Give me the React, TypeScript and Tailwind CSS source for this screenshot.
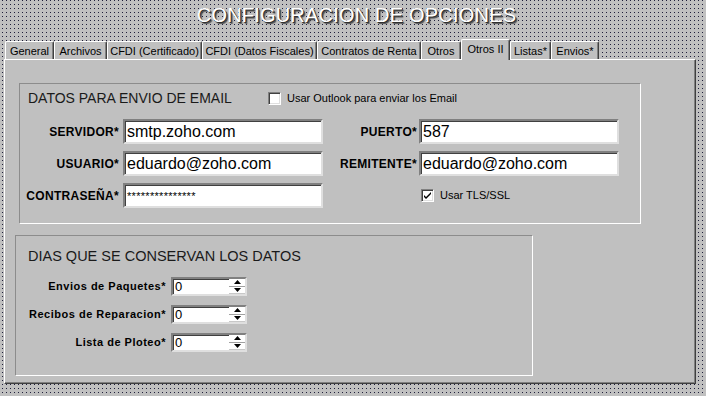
import React from "react";

const FONT = "[font-family:'Liberation_Sans',Arial,sans-serif]";

const tabs = [
  { label: "General", w: "w-[49px]" },
  { label: "Archivos", w: "w-[53px]" },
  { label: "CFDI (Certificado)", w: "w-[95px]" },
  { label: "CFDI (Datos Fiscales)", w: "w-[115px]" },
  { label: "Contratos de Renta", w: "w-[104px]" },
  { label: "Otros", w: "w-[40px]" },
  { label: "Otros II", w: "w-[49px]", active: true },
  { label: "Listas*", w: "w-[41px]" },
  { label: "Envios*", w: "w-[48px]" },
];

function Tab({ label, w, active }: { label: string; w: string; active?: boolean }) {
  if (active) {
    return (
      <div className={`${w} h-[21px] -mb-[1px] bg-[#c0c0c0] border-t border-l border-white border-r border-r-[#404040] shadow-[inset_-1px_0_0_#808080] rounded-t-[2px] flex justify-center pt-[3px] text-[11px] leading-[13px] text-black relative z-10`}>
        {label}
      </div>
    );
  }
  return (
    <div className={`${w} h-[18px] bg-[#c0c0c0] border-t border-l border-white border-r border-r-[#404040] shadow-[inset_-1px_0_0_#808080] rounded-t-[2px] flex justify-center pt-[3px] text-[11px] leading-[13px] text-black`}>
      {label}
    </div>
  );
}

function Check({ checked }: { checked?: boolean }) {
  return (
    <div className="w-[13px] h-[13px] bg-white border-t border-l border-[#808080] border-b border-r border-b-white border-r-white shadow-[inset_1px_1px_0_#404040,inset_-1px_-1px_0_#dfdfdf] flex items-center justify-center shrink-0">
      {checked && (
        <svg width="9" height="9" viewBox="0 0 9 9">
          <path d="M1 4 L3 6 L8 1 L8 3 L3 8 L1 6 Z" fill="#000" />
        </svg>
      )}
    </div>
  );
}

function TextBox({ value, small }: { value: string; small?: boolean }) {
  return (
    <div className="w-[200px] h-[25px] bg-white border-t-2 border-l-2 border-t-[#808080] border-l-[#808080] border-b-2 border-r-2 border-b-[#dfdfdf] border-r-[#dfdfdf] shadow-[inset_1px_1px_0_#404040] flex items-center pl-[2px] shrink-0">
      <span className={small ? "text-[11px] leading-[12px] pt-[1px] text-black tracking-[0.3px]" : "text-[16px] leading-[18px] text-black"}>{value}</span>
    </div>
  );
}

function Spin() {
  return (
    <div className="w-[76px] h-[19px] bg-white border-t-2 border-l-2 border-t-[#808080] border-l-[#808080] border-b-2 border-r-2 border-b-[#dfdfdf] border-r-[#dfdfdf] shadow-[inset_1px_1px_0_#404040] flex shrink-0">
      <span className="flex-1 pl-[2px] text-[13px] leading-[15px] text-black">0</span>
      <div className="w-[16px] h-full flex flex-col bg-white">
        <div className="flex-1 flex items-center justify-center border-b border-[#a0a0a0]">
          <svg width="7" height="4" viewBox="0 0 7 4"><path d="M3.5 0 L7 4 L0 4 Z" fill="#000" /></svg>
        </div>
        <div className="flex-1 flex items-center justify-center border-b border-[#c8c8c8]">
          <svg width="7" height="4" viewBox="0 0 7 4"><path d="M0 0 L7 0 L3.5 4 Z" fill="#000" /></svg>
        </div>
      </div>
    </div>
  );
}

function Label({ text, w }: { text: string; w: string }) {
  return (
    <div className={`${w} text-right text-[12px] leading-[14px] font-bold tracking-[0.3px] text-black shrink-0`}>{text}</div>
  );
}

export default function App() {
  return (
    <div
      className={`w-[706px] h-[396px] overflow-hidden bg-[#c0c0c0] [background-image:conic-gradient(from_270deg_at_1px_1px,#1e1e3a_90deg,transparent_0)] [background-size:4px_4px] [background-position:2px_0px] ${FONT} flex flex-col`}
    >
      {/* Title */}
      <div className="h-[39px] pt-[4px] pl-[7px] flex justify-center">
        <h1 className="text-[20px] leading-[22px] text-white [text-shadow:1px_1px_0_#303030,2px_2px_1px_#505050] tracking-[0.2px]">
          CONFIGURACION DE OPCIONES
        </h1>
      </div>

      {/* Tabs */}
      <div className="h-[20px] flex items-end pl-[5px]">
        {tabs.map((t) => (
          <Tab key={t.label} label={t.label} w={t.w} active={t.active} />
        ))}
      </div>

      {/* Tab panel */}
      <div className="ml-[4px] w-[692px] h-[325px] bg-[#c0c0c0] border-t border-l border-white border-r border-b border-r-[#404040] border-b-[#404040] shadow-[inset_-1px_-1px_0_#808080] flex flex-col items-start">
        {/* Email group */}
        <div className="ml-[14px] mt-[23px] w-[622px] h-[141px] border-t border-l border-[#8c8c8c] border-b border-r border-b-white border-r-white flex flex-col">
          <div className="flex items-center pt-[6px] pl-[8px]">
            <div className="w-[240px] text-[14px] leading-[16px] text-[#1a1a1a]">DATOS PARA ENVIO DE EMAIL</div>
            <Check />
            <span className="ml-[6px] text-[11px] leading-[13px] text-black">Usar Outlook para enviar los Email</span>
          </div>
          <div className="mt-[13px] flex flex-col gap-[7px]">
            <div className="flex items-center h-[25px]">
              <Label text="SERVIDOR*" w="w-[103px] pr-[4px]" />
              <TextBox value="smtp.zoho.com" />
              <Label text="PUERTO*" w="w-[96px] pr-[2px]" />
              <TextBox value="587" />
            </div>
            <div className="flex items-center h-[25px]">
              <Label text="USUARIO*" w="w-[103px] pr-[4px]" />
              <TextBox value="eduardo@zoho.com" />
              <Label text="REMITENTE*" w="w-[96px] pr-[2px]" />
              <TextBox value="eduardo@zoho.com" />
            </div>
            <div className="flex items-center h-[25px]">
              <Label text="CONTRASEÑA*" w="w-[103px] pr-[4px]" />
              <TextBox value="***************" small />
              <div className="w-[98px] shrink-0" />
              <Check checked />
              <span className="ml-[6px] text-[11px] leading-[13px] text-black">Usar TLS/SSL</span>
            </div>
          </div>
        </div>

        {/* Retention group */}
        <div className="ml-[10px] mt-[11px] w-[518px] h-[141px] border-t border-l border-[#8c8c8c] border-b border-r border-b-white border-r-white flex flex-col">
          <div className="pt-[12px] pl-[12px] text-[14.5px] leading-[16px] text-[#1a1a1a]">DIAS QUE SE CONSERVAN LOS DATOS</div>
          <div className="mt-[13px] flex flex-col gap-[9px]">
            {["Envios de Paquetes*", "Recibos de Reparacion*", "Lista de Ploteo*"].map((l) => (
              <div key={l} className="flex items-center h-[19px]">
                <div className="w-[155px] pr-[5px] text-right text-[11px] leading-[13px] font-bold tracking-[0.5px] text-black shrink-0">{l}</div>
                <Spin />
              </div>
            ))}
          </div>
        </div>
      </div>
    </div>
  );
}
